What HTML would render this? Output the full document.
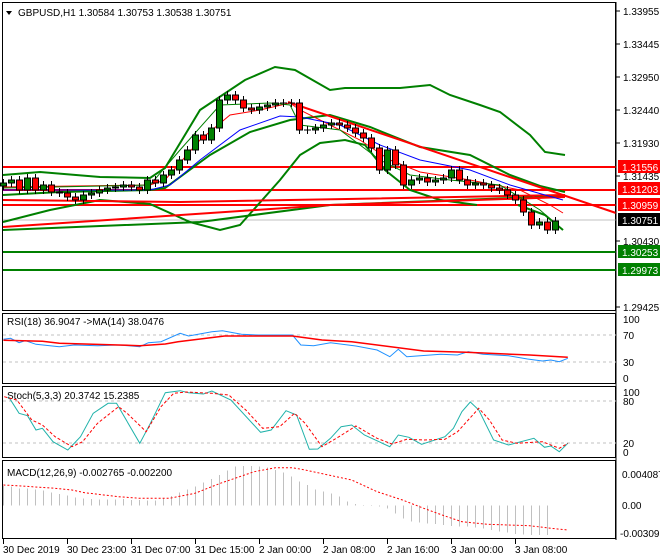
<!DOCTYPE html>
<html><head><meta charset="utf-8">
<style>
html,body{margin:0;padding:0;background:#fff;}
svg{display:block;font-family:"Liberation Sans",sans-serif;}
</style></head>
<body>
<svg id="s" width="660" height="560" xmlns="http://www.w3.org/2000/svg"></svg>
<script>
var o='';
function L(x1,y1,x2,y2,c,w,d){o+='<line x1="'+x1+'" y1="'+y1+'" x2="'+x2+'" y2="'+y2+'" stroke="'+c+'" stroke-width="'+w+'"'+(d?' stroke-dasharray="'+d+'"':'')+' shape-rendering="crispEdges"/>';}
function P(pts,c,w,d){o+='<polyline fill="none" points="'+pts.map(function(p){return p[0]+','+p[1]}).join(' ')+'" stroke="'+c+'" stroke-width="'+w+'"'+(d?' stroke-dasharray="'+d+'"':'')+'/>';}
function Z(pts,c,w,d){P(pts.map(function(p){return [(p[0]/2.36).toFixed(1),(300+p[1]/3).toFixed(1)]}),c,w,d);}
function T(x,y,t,c,a){o+='<text x="'+x+'" y="'+y+'" font-size="10" fill="'+(c||'#000')+'"'+(a?' text-anchor="'+a+'"':'')+'>'+t+'</text>';}
// frames
o+='<rect x="2.5" y="2.5" width="613" height="308" fill="#fff" stroke="#000"/>';
o+='<rect x="2.5" y="313.5" width="613" height="70" fill="#fff" stroke="#000"/>';
o+='<rect x="2.5" y="386.5" width="613" height="71" fill="#fff" stroke="#000"/>';
o+='<rect x="2.5" y="460.5" width="613" height="78" fill="#fff" stroke="#000"/>';
// horizontal levels
L(3,220,616,220,'#c0c0c0',1);
L(3,252,616,252,'#008000',2);L(3,270,616,270,'#008000',2);
L(3,167,616,167,'#ff0000',2);L(3,190,616,190,'#ff0000',2);L(3,205,616,205,'#ff0000',2);
// bollinger
P([[3,175],[40,172],[100,177],[150,178],[165,168],[200,110],[245,80],[275,67],[295,70],[330,90],[345,88],[400,88],[430,85],[450,95],[480,105],[500,112],[530,135],[545,152],[565,155]],'#008000',2);
P([[3,195],[60,192],[150,190],[165,188],[210,155],[250,132],[290,120],[330,115],[370,127],[420,147],[470,155],[510,175],[540,186],[565,192]],'#008000',2);
P([[3,222],[50,210],[100,200],[150,204],[190,222],[220,230],[240,225],[280,180],[300,155],[320,143],[345,140],[365,145],[385,170],[410,190],[440,200],[477,205]],'#008000',2);
P([[3,230],[200,222],[330,205],[565,196]],'#008000',2);
P([[518,205],[545,215],[563,230]],'#008000',2);
// red trend lines
P([[3,227],[330,205],[565,197]],'#ff0000',2);
P([[3,200],[180,202],[565,195]],'#ff0000',2);
P([[288,102],[616,213]],'#ff0000',2);
// MAs
P([[3,187],[150,185],[165,180],[200,140],[230,115],[260,110],[290,103],[300,110],[330,125],[360,140],[390,160],[420,172],[470,180],[520,190],[550,205],[563,213]],'#ff0000',1);
P([[3,190],[150,190],[170,185],[200,160],[240,130],[280,116],[300,117],[340,125],[380,145],[420,160],[470,170],[510,185],[545,195],[563,200]],'#0000ff',1);
P([[3,188],[150,185],[180,150],[220,105],[270,103],[290,105],[300,125],[340,130],[380,160],[410,175],[450,180],[500,185],[540,210],[563,230]],'#008000',1);
// candles
var c=[183,180,190,178,190,185,192,193,197,200,195,193,190,188,187,185,187,190,180,183,175,170,160,150,135,140,128,100,95,100,108,110,107,105,103,103,103,130,130,128,125,123,125,128,133,138,148,170,150,165,185,180,178,182,180,178,170,180,185,183,185,188,190,195,200,212,225,222,230,221];
var prev=186;
for(var i=0;i<c.length;i++){var x=3+8*i,op=prev,cl=c[i];var t=Math.min(op,cl),b=Math.max(op,cl);
L(x+0.5,t-4,x+0.5,b+4,'#000',1);
var col=cl<op?'#008000':'#ff0000';if(b-t<1){L(x-3,t,x+4,t,'#000',1);}else o+='<rect x="'+(x-2.5)+'" y="'+t+'" width="6" height="'+(b-t)+'" fill="'+col+'" stroke="#000" stroke-width="1"/>';
prev=cl;}
// title
o+='<polygon points="6,11 12,11 9,15" fill="#000"/>';
T(18,16,'GBPUSD,H1  1.30584 1.30753 1.30538 1.30751');
// price axis
L(616,2,616,540,'#000',1);
var pl=[[11,'1.33955'],[44,'1.33445'],[77,'1.32950'],[110,'1.32440'],[143,'1.31930'],[176,'1.31435'],[241,'1.30430'],[307,'1.29425']];
pl.forEach(function(p){L(616,p[0],620,p[0],'#000',1);T(623,p[0]+4,p[1]);});
[[167,'1.31556','#ff0000'],[189,'1.31203','#ff0000'],[205,'1.30959','#ff0000'],[220,'1.30751','#000'],[252,'1.30253','#008000'],[270,'1.29973','#008000']].forEach(function(p){o+='<rect x="618" y="'+(p[0]-7)+'" width="42" height="13" fill="'+p[2]+'"/>';T(622,p[0]+4,p[1],'#fff');});
// RSI
L(3,335,616,335,'#c0c0c0',1,'3,3');L(3,362,616,362,'#c0c0c0',1,'3,3');
T(7,325,'RSI(18) 36.9047  -&gt;MA(14) 38.0476');
T(623,323,'100');T(623,339,'70');T(623,366,'30');T(623,382,'0');
Z([[8,118],[25,115],[45,128],[60,122],[85,133],[140,140],[175,135],[230,137],[280,135],[330,140],[350,128],[380,125],[425,100],[445,108],[500,95],[525,92],[570,103],[610,105],[690,105],[710,135],[740,137],[780,128],[840,138],[890,150],[920,170],[940,148],[960,170],[1040,163],[1080,165],[1105,155],[1140,163],[1200,167],[1245,177],[1280,183],[1300,180],[1320,185],[1340,175]],'#1e90ff',1);
Z([[8,121],[100,124],[140,130],[200,132],[280,135],[330,137],[390,132],[420,125],[530,108],[690,108],[760,120],[830,125],[1000,153],[1100,157],[1250,165],[1340,172]],'#ff0000',1.5);
// Stoch
L(3,401,616,401,'#c0c0c0',1,'3,3');L(3,443,616,443,'#c0c0c0',1,'3,3');
T(7,399,'Stoch(5,3,3) 20.3742 15.2385');
T(623,396,'100');T(623,405,'80');T(623,447,'20');T(623,456,'0');
Z([[20,290],[45,340],[65,347],[85,390],[100,385],[125,425],[160,450],[190,410],[220,340],[255,310],[275,310],[330,430],[355,370],[390,278],[425,272],[445,278],[480,282],[500,273],[545,300],[615,397],[640,390],[675,332],[700,345],[730,448],[750,447],[780,415],[805,380],[830,375],[860,405],[920,440],[940,405],[965,412],[995,433],[1050,410],[1070,385],[1090,335],[1110,306],[1130,330],[1165,420],[1200,435],[1260,415],[1285,442],[1300,438],[1320,455],[1340,430]],'#20b2aa',1);
Z([[10,290],[40,300],[75,360],[100,375],[130,410],[170,440],[195,425],[230,370],[280,320],[300,340],[345,395],[380,320],[410,280],[440,276],[500,280],[540,285],[580,330],[620,385],[660,380],[695,340],[720,370],[760,440],[800,410],[840,378],[890,415],[925,432],[960,418],[1000,420],[1050,418],[1080,395],[1130,325],[1155,360],[1185,420],[1220,430],[1280,425],[1320,445],[1340,430]],'#ff0000',1,'3,2');
// MACD
T(7,476,'MACD(12,26,9) -0.002765 -0.002200');
T(622,478,'0.004087');T(622,509,'0.00');T(620,537,'-0.003091');
var h=[558,560,565,565,568,572,577,582,587,592,595,597,598,598,598,597,600,600,602,602,595,588,578,568,560,548,537,525,512,500,498,498,500,503,510,518,530,545,555,568,575,580,590,605,612,615,618,620,625,640,655,665,668,670,672,675,678,680,680,682,685,690,695,698,702,704,705,705,705];
for(var i=0;i<h.length;i++){var x=3+8*i+0.5;var y=300+h[i]/3;L(x,505.7,x,y,'#c0c0c0',1);}
Z([[8,555],[40,557],[130,565],[170,570],[200,578],[280,590],[330,595],[400,595],[460,580],[520,550],[600,515],[650,503],[690,503],[720,510],[830,540],[890,575],[950,600],[1000,625],[1050,648],[1090,665],[1150,673],[1250,677],[1300,685],[1340,690]],'#ff0000',1,'2,2');
// time axis
var tl=['30 Dec 2019','30 Dec 23:00','31 Dec 07:00','31 Dec 15:00','2 Jan 00:00','2 Jan 08:00','2 Jan 16:00','3 Jan 00:00','3 Jan 08:00'];
tl.forEach(function(t,i){var x=3+64*i;L(x+0.5,539,x+0.5,544,'#000',1);T(x,553,t);});
document.getElementById('s').innerHTML=o;
</script>
</body></html>
